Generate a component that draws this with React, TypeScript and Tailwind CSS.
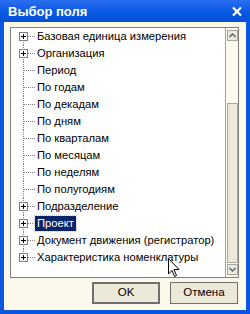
import React from "react";

type Item = { label: string; plus?: boolean; selected?: boolean };

const items: Item[] = [
  { label: "Базовая единица измерения", plus: true },
  { label: "Организация", plus: true },
  { label: "Период" },
  { label: "По годам" },
  { label: "По декадам" },
  { label: "По дням" },
  { label: "По кварталам" },
  { label: "По месяцам" },
  { label: "По неделям" },
  { label: "По полугодиям" },
  { label: "Подразделение", plus: true },
  { label: "Проект", plus: true, selected: true },
  { label: "Документ движения (регистратор)", plus: true },
  { label: "Характеристика номенклатуры", plus: true },
];

function Connector({ plus, first, last }: { plus?: boolean; first: boolean; last: boolean }) {
  return (
    <svg width="21" height="17" className="shrink-0" shapeRendering="crispEdges">
      <line
        x1="9.5"
        y1={first ? 8 : 0}
        x2="9.5"
        y2={last ? 9 : 17}
        stroke="#808080"
        strokeDasharray="1 1"
      />
      <line x1="10" y1="8.5" x2="21" y2="8.5" stroke="#808080" strokeDasharray="1 1" />
      {plus && (
        <g>
          <rect x="5.5" y="4.5" width="8" height="8" fill="#fff" stroke="#808080" />
          <line x1="7" y1="8.5" x2="12" y2="8.5" stroke="#000" />
          <line x1="9.5" y1="6" x2="9.5" y2="11" stroke="#000" />
        </g>
      )}
    </svg>
  );
}

function Arrow({ up }: { up?: boolean }) {
  return (
    <div className="h-[11px] w-[11px] border border-[#a7a69a] bg-[#ece9d8] flex items-center justify-center">
      <svg width="7" height="5" viewBox="0 0 7 5">
        <path
          d={up ? "M0.5 4 L3.5 1 L6.5 4" : "M0.5 1 L3.5 4 L6.5 1"}
          fill="none"
          stroke="#4d6185"
          strokeWidth="1.4"
        />
      </svg>
    </div>
  );
}

export default function App() {
  return (
    <div
      className="relative w-[250px] h-[314px] bg-[#0a56e0] flex flex-col overflow-hidden"
      style={{ fontFamily: '"Liberation Sans", Arial, sans-serif' }}
    >
      {/* title bar */}
      <div className="h-[22px] flex items-center justify-between pl-[8px] pr-[8px] bg-gradient-to-b from-[#2a6ff0] via-[#0a5ae4] to-[#0550d8]">
        <span className="text-white text-[13px] font-bold leading-none">Выбор поля</span>
        <svg width="10" height="9" viewBox="0 0 10 9">
          <path d="M1 0.5 L9 8.5 M9 0.5 L1 8.5" stroke="#fff" strokeWidth="2.2" />
        </svg>
      </div>

      {/* client area */}
      <div className="flex-1 mx-[4px] mb-[4px] bg-[#fdf8ec] flex flex-col pt-[5px] pl-[6px] pr-[7px]">
        <div className="h-[251px] border border-[#7f7f7f] bg-white flex">
          <div className="flex-1 pl-[3px]">
            {items.map((it, i) => (
              <div key={it.label} className="h-[17px] flex items-center">
                <Connector plus={it.plus} first={i === 0} last={i === items.length - 1} />
                <span
                  className={
                    "text-[11.2px] leading-[15px] whitespace-nowrap px-[2px] " +
                    (it.selected
                      ? "bg-[#0a246a] text-white outline outline-1 outline-dotted outline-[#c0c0ff]"
                      : "text-black")
                  }
                >
                  {it.label}
                </span>
              </div>
            ))}
          </div>
          {/* scrollbar */}
          <div className="w-[13px] border-l border-[#a0a0a0] bg-[#fdfbf0] flex flex-col items-center py-[2px]">
            <Arrow up />
            <div className="flex-1 w-full flex flex-col items-center pt-[62px] pb-[1px]">
              <div className="flex-1 w-[11px] border border-[#a7a69a] bg-[#ece9d8]" />
            </div>
            <Arrow />
          </div>
        </div>

        <div className="mt-[4px] flex justify-end gap-[10px] pr-[1px]">
          <button className="w-[68px] h-[22px] border-2 border-[#6f6f6f] bg-[#ece9d8] text-[11.5px] text-black leading-none">
            OK
          </button>
          <button className="w-[68px] h-[22px] border border-[#6f6f6f] bg-[#ece9d8] text-[11.5px] text-black leading-none">
            Отмена
          </button>
        </div>
      </div>

      {/* mouse cursor */}
      <svg
        className="absolute left-[168px] top-[258px]"
        width="13"
        height="20"
        viewBox="0 0 13 20"
      >
        <path
          d="M0.5 0.5 L0.5 16 L4 12.5 L6.5 18.5 L8.5 17.5 L6 11.5 L11 11.5 Z"
          fill="#fff"
          stroke="#000"
          strokeWidth="1"
        />
      </svg>
    </div>
  );
}
